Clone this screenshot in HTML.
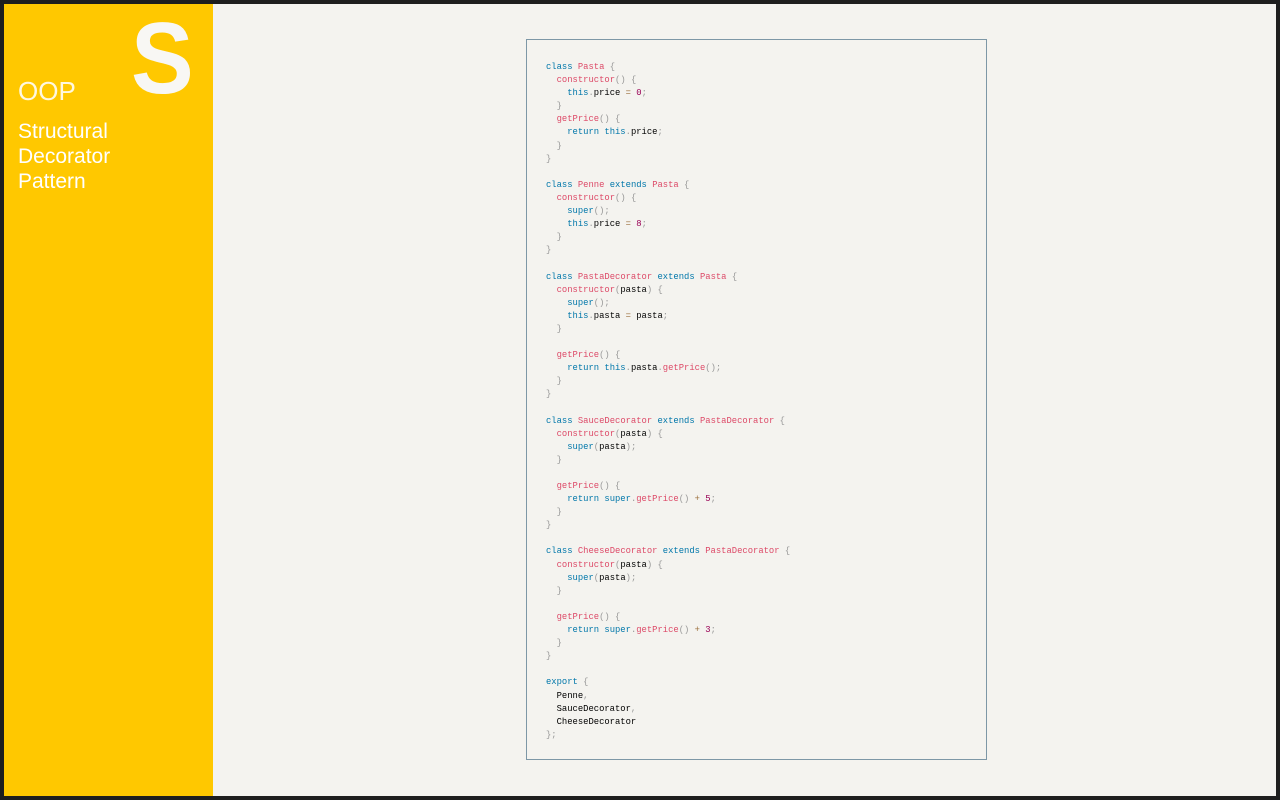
<!DOCTYPE html>
<html><head><style>
html,body{margin:0;padding:0;width:1280px;height:800px;background:#1e1e1e;overflow:hidden}
#app{position:absolute;left:4px;top:4px;width:1272px;height:792px;background:#f4f3ef}
#side{position:absolute;left:0;top:0;width:209px;height:792px;background:#ffc800;color:#fff;font-family:"Liberation Sans",sans-serif}
.S{position:absolute;left:127px;top:5px;font-size:101px;font-weight:bold;color:#f8f7f4;line-height:1;transform:scaleX(0.93);transform-origin:left top}
.oop{position:absolute;left:14px;top:74px;font-size:26px;font-weight:300;line-height:1;color:#fff8e0}
.t{position:absolute;left:14px;top:115px;font-size:21px;line-height:25px}
#box{position:absolute;left:522px;top:35px;width:459px;height:719px;border:1px solid #7d97a6;background:#f4f3ef}
pre{position:absolute;left:19px;top:21px;margin:0;font-family:"Liberation Mono",monospace;font-size:8.85px;line-height:13.1px;color:#000}
.k{color:#07a}.f{color:#dd4a68}.p{color:#999}.n{color:#905}.o{color:#9a6e3a}
</style></head><body><div id="app">
<div id="side"><div class="S">S</div><div class="oop">OOP</div><div class="t">Structural<br>Decorator<br>Pattern</div></div>
<div id="box"><pre><span class="k">class</span> <span class="f">Pasta</span> <span class="p">{</span>
  <span class="f">constructor</span><span class="p">()</span> <span class="p">{</span>
    <span class="k">this</span><span class="p">.</span>price <span class="o">=</span> <span class="n">0</span><span class="p">;</span>
  <span class="p">}</span>
  <span class="f">getPrice</span><span class="p">()</span> <span class="p">{</span>
    <span class="k">return</span> <span class="k">this</span><span class="p">.</span>price<span class="p">;</span>
  <span class="p">}</span>
<span class="p">}</span>

<span class="k">class</span> <span class="f">Penne</span> <span class="k">extends</span> <span class="f">Pasta</span> <span class="p">{</span>
  <span class="f">constructor</span><span class="p">()</span> <span class="p">{</span>
    <span class="k">super</span><span class="p">();</span>
    <span class="k">this</span><span class="p">.</span>price <span class="o">=</span> <span class="n">8</span><span class="p">;</span>
  <span class="p">}</span>
<span class="p">}</span>

<span class="k">class</span> <span class="f">PastaDecorator</span> <span class="k">extends</span> <span class="f">Pasta</span> <span class="p">{</span>
  <span class="f">constructor</span><span class="p">(</span>pasta<span class="p">)</span> <span class="p">{</span>
    <span class="k">super</span><span class="p">();</span>
    <span class="k">this</span><span class="p">.</span>pasta <span class="o">=</span> pasta<span class="p">;</span>
  <span class="p">}</span>

  <span class="f">getPrice</span><span class="p">()</span> <span class="p">{</span>
    <span class="k">return</span> <span class="k">this</span><span class="p">.</span>pasta<span class="p">.</span><span class="f">getPrice</span><span class="p">();</span>
  <span class="p">}</span>
<span class="p">}</span>

<span class="k">class</span> <span class="f">SauceDecorator</span> <span class="k">extends</span> <span class="f">PastaDecorator</span> <span class="p">{</span>
  <span class="f">constructor</span><span class="p">(</span>pasta<span class="p">)</span> <span class="p">{</span>
    <span class="k">super</span><span class="p">(</span>pasta<span class="p">);</span>
  <span class="p">}</span>

  <span class="f">getPrice</span><span class="p">()</span> <span class="p">{</span>
    <span class="k">return</span> <span class="k">super</span><span class="p">.</span><span class="f">getPrice</span><span class="p">()</span> <span class="o">+</span> <span class="n">5</span><span class="p">;</span>
  <span class="p">}</span>
<span class="p">}</span>

<span class="k">class</span> <span class="f">CheeseDecorator</span> <span class="k">extends</span> <span class="f">PastaDecorator</span> <span class="p">{</span>
  <span class="f">constructor</span><span class="p">(</span>pasta<span class="p">)</span> <span class="p">{</span>
    <span class="k">super</span><span class="p">(</span>pasta<span class="p">);</span>
  <span class="p">}</span>

  <span class="f">getPrice</span><span class="p">()</span> <span class="p">{</span>
    <span class="k">return</span> <span class="k">super</span><span class="p">.</span><span class="f">getPrice</span><span class="p">()</span> <span class="o">+</span> <span class="n">3</span><span class="p">;</span>
  <span class="p">}</span>
<span class="p">}</span>

<span class="k">export</span> <span class="p">{</span>
  Penne<span class="p">,</span>
  SauceDecorator<span class="p">,</span>
  CheeseDecorator
<span class="p">};</span></pre></div>
</div></body></html>
